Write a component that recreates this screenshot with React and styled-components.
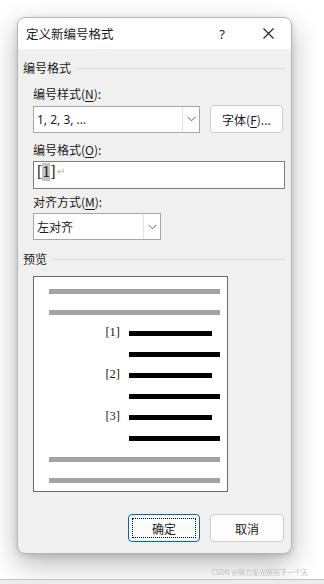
import React from "react";
import styled, { createGlobalStyle } from "styled-components";

const Global = createGlobalStyle`
  html, body {
    margin: 0;
    padding: 0;
    background: #ffffff;
    font-family: "Noto Sans CJK SC", "Noto Sans", sans-serif;
    color: #1a1a1a;
  }
`;

const Page = styled.div`
  width: 324px;
  height: 584px;
  overflow: hidden;
  display: flex;
  flex-direction: column;
  background: #ffffff;
`;

const Stage = styled.div`
  padding: 17px 0 0 17px;
`;

const Dialog = styled.div`
  width: 275px;
  height: 537px;
  box-sizing: border-box;
  border: 1px solid #b4b4b4;
  border-radius: 8px;
  background: #f0f0f0;
  box-shadow: 0 10px 28px rgba(0, 0, 0, 0.28), 0 2px 6px rgba(0, 0, 0, 0.12);
  display: flex;
  flex-direction: column;
  overflow: hidden;
`;

const TitleBar = styled.div`
  height: 31px;
  flex: none;
  background: #ffffff;
  display: flex;
  align-items: center;
  padding-left: 8px;
`;

const Title = styled.div`
  flex: 1;
  font-size: 12.5px;
  color: #1a1a1a;
`;

const TitleButton = styled.div`
  width: 46px;
  height: 31px;
  display: flex;
  align-items: center;
  justify-content: center;
  font-family: "Noto Sans", sans-serif;
  font-size: 13px;
  color: #222;
`;

const Body = styled.div`
  flex: 1;
  display: flex;
  flex-direction: column;
  padding: 0 6px 0 5px;
`;

const SectionHead = styled.div`
  margin-top: ${(p) => p.$top}px;
  height: 16px;
  display: flex;
  align-items: center;
  gap: 5px;
  font-size: 12px;
  line-height: 16px;
  &::after {
    content: "";
    flex: 1;
    height: 1px;
    background: #dadada;
  }
`;

const Label = styled.div`
  margin: ${(p) => p.$top}px 0 0 10px;
  height: 16px;
  font-size: 12px;
  line-height: 16px;
  u {
    text-decoration: underline;
    text-underline-offset: 2px;
  }
`;

const FieldRow = styled.div`
  margin: ${(p) => p.$top}px 0 0 10px;
  display: flex;
  align-items: center;
  gap: 10px;
`;

const Combo = styled.div`
  width: ${(p) => p.$w}px;
  height: 27px;
  box-sizing: border-box;
  border: 1px solid #a7a7a7;
  background: #ffffff;
  display: flex;
  align-items: center;
`;

const ComboText = styled.div`
  flex: 1;
  padding-left: 3px;
  font-size: 12px;
  font-family: ${(p) => (p.$latin ? '"Noto Sans", sans-serif' : "inherit")};
`;

const ComboArrow = styled.div`
  width: 16px;
  height: 25px;
  border-left: 1px solid #e2e2e2;
  display: flex;
  align-items: center;
  justify-content: center;
`;

const Button = styled.button`
  width: ${(p) => p.$w}px;
  height: 28px;
  box-sizing: border-box;
  border: 1px solid ${(p) => (p.$primary ? "#0067c0" : "#cccccc")};
  border-radius: 4px;
  background: #fdfdfd;
  font-family: "Noto Sans CJK SC", sans-serif;
  font-size: 12px;
  color: #1a1a1a;
  padding: 0;
  position: relative;
  u {
    text-decoration: underline;
    text-underline-offset: 2px;
  }
  ${(p) =>
    p.$primary &&
    `
    &::after {
      content: "";
      position: absolute;
      inset: 3px;
      border: 1px dotted #000;
    }
  `}
`;

const Input = styled.div`
  width: 252px;
  height: 28px;
  box-sizing: border-box;
  border: 1px solid #7f7f7f;
  background: #ffffff;
  padding: 1px 0 0 3px;
  font-family: "Liberation Serif", serif;
  font-size: 16px;
  line-height: 18px;
  display: flex;
  align-items: flex-start;
`;

const Mark = styled.span`
  background: #c4c4c4;
`;

const Return = styled.span`
  color: #b0b0b0;
  font-family: "DejaVu Sans", sans-serif;
  font-size: 10px;
  margin-left: 1px;
`;

const Preview = styled.div`
  margin: ${(p) => p.$top}px 0 0 10px;
  width: 195px;
  height: 216px;
  box-sizing: border-box;
  border: 1px solid #6a6a6a;
  background: #ffffff;
  padding: 12px 7px 0 15px;
  display: flex;
  flex-direction: column;
  gap: 16px;
`;

const Bar = styled.div`
  height: 5px;
  width: ${(p) => p.$w}px;
  margin-left: ${(p) => p.$indent || 0}px;
  background: ${(p) => (p.$gray ? "#a3a3a3" : "#000000")};
`;

const ItemRow = styled.div`
  height: 5px;
  display: flex;
  align-items: center;
`;

const Num = styled.div`
  width: 71px;
  margin-right: 9px;
  text-align: right;
  font-family: "Liberation Serif", serif;
  font-size: 12.5px;
  line-height: 5px;
  position: relative;
  top: -1px;
`;

const Footer = styled.div`
  margin-top: 22px;
  padding-right: 1px;
  display: flex;
  justify-content: flex-end;
  gap: 10px;
`;

const Watermark = styled.div`
  margin-top: 14px;
  padding-right: 16px;
  text-align: right;
  font-size: 7px;
  line-height: 8px;
  color: #bdbdbd;
  filter: blur(0.3px);
`;

const BottomEdge = styled.div`
  margin-top: auto;
  height: 4px;
  border-top: 1px solid #c4c4c4;
  background: #ececec;
`;

const Chevron = () => (
  <svg width="9" height="6" viewBox="0 0 9 6">
    <path d="M0.5 0.8 L4.5 4.8 L8.5 0.8" fill="none" stroke="#606060" strokeWidth="1" />
  </svg>
);

const Close = () => (
  <svg width="11" height="11" viewBox="0 0 11 11">
    <path d="M0.5 0.5 L10.5 10.5 M10.5 0.5 L0.5 10.5" stroke="#222" strokeWidth="1.1" />
  </svg>
);

const items = ["[1]", "[2]", "[3]"];

export default function App() {
  return (
    <Page>
      <Global />
      <Stage>
        <Dialog>
          <TitleBar>
            <Title>定义新编号格式</Title>
            <TitleButton>?</TitleButton>
            <TitleButton>
              <Close />
            </TitleButton>
          </TitleBar>
          <Body>
            <SectionHead $top={11}>编号格式</SectionHead>
            <Label $top={10}>
              编号样式(<u>N</u>):
            </Label>
            <FieldRow $top={3}>
              <Combo $w={167}>
                <ComboText $latin>1, 2, 3, ...</ComboText>
                <ComboArrow>
                  <Chevron />
                </ComboArrow>
              </Combo>
              <Button $w={73}>
                字体(<u>F</u>)...
              </Button>
            </FieldRow>
            <Label $top={9}>
              编号格式(<u>O</u>):
            </Label>
            <FieldRow $top={3}>
              <Input>
                [<Mark>1</Mark>]<Return>↵</Return>
              </Input>
            </FieldRow>
            <Label $top={5}>
              对齐方式(<u>M</u>):
            </Label>
            <FieldRow $top={3}>
              <Combo $w={128}>
                <ComboText>左对齐</ComboText>
                <ComboArrow>
                  <Chevron />
                </ComboArrow>
              </Combo>
            </FieldRow>
            <SectionHead $top={11}>预览</SectionHead>
            <Preview $top={9}>
              <Bar $gray $w={171} />
              <Bar $gray $w={171} />
              {items.map((n) => (
                <React.Fragment key={n}>
                  <ItemRow>
                    <Num>{n}</Num>
                    <Bar $w={83} />
                  </ItemRow>
                  <Bar $w={91} $indent={80} />
                </React.Fragment>
              ))}
              <Bar $gray $w={171} />
              <Bar $gray $w={171} />
            </Preview>
            <Footer>
              <Button $primary $w={72}>
                确定
              </Button>
              <Button $w={74}>取消</Button>
            </Footer>
          </Body>
        </Dialog>
      </Stage>
      <Watermark>CSDN @努力发光照亮下一个天</Watermark>
      <BottomEdge />
    </Page>
  );
}
